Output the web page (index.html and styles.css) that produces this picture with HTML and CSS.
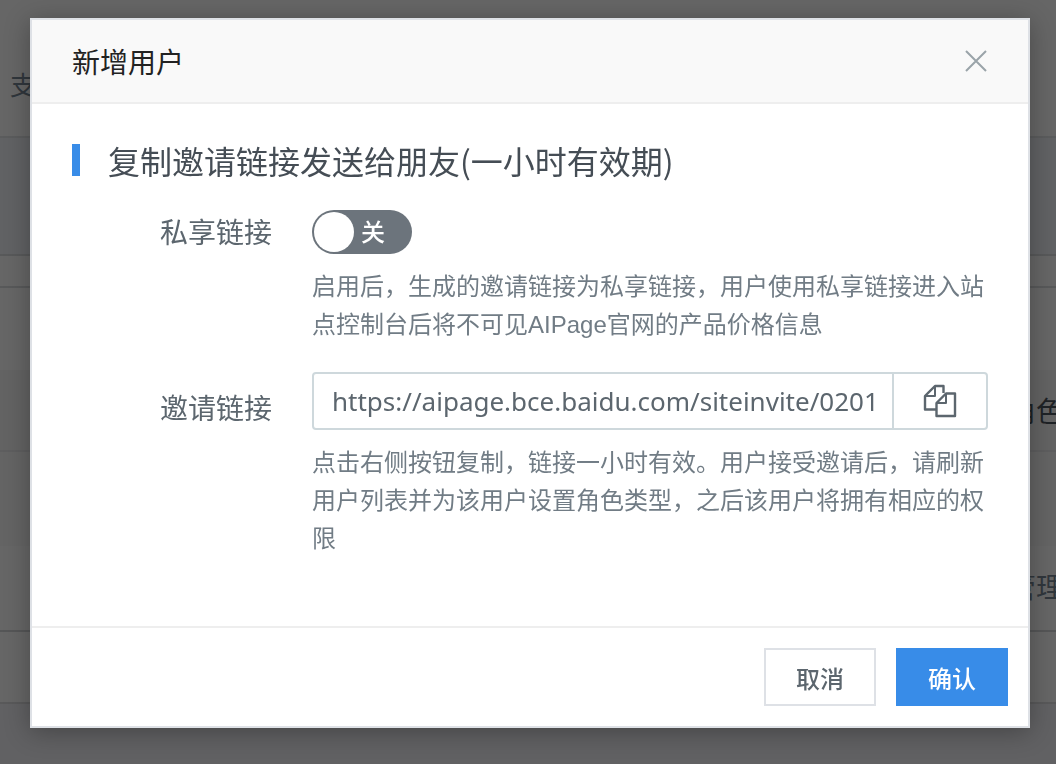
FILE: index.html
```html
<!DOCTYPE html>
<html lang="zh-CN">
  <head>
    <meta charset="utf-8">
    <meta name="viewport" content="width=device-width, initial-scale=1">
    <title>新增用户</title>
    <link rel="stylesheet" href="styles.css">
  </head>
  <body>
    <div class="page" aria-hidden="true">
      <div class="page-nav">支</div>
      <div class="page-banner"></div>
      <div class="page-space"></div>
      <div class="page-toolbar"></div>
      <div class="page-row page-row-head"><span>角色</span></div>
      <div class="page-row page-row-shade"></div>
      <div class="page-row page-row-user"><span>管理</span></div>
      <div class="page-row page-row-last"></div>
    </div>

    <div class="overlay">
      <form class="dialog" role="dialog" aria-labelledby="dialog-title">
        <div class="dialog-head">
          <h1 id="dialog-title">新增用户</h1>
          <button type="button" class="close" aria-label="关闭">
            <svg width="24" height="24" viewBox="0 0 24 24" fill="none" stroke="#9aa4a9" stroke-width="2">
              <path d="M2 2l20 20M22 2L2 22"/>
            </svg>
          </button>
        </div>

        <div class="dialog-body">
          <h2>复制邀请链接发送给朋友(一小时有效期)</h2>

          <div class="field">
            <label for="private-link">私享链接</label>
            <div class="field-content">
              <span class="switch">
                <input type="checkbox" id="private-link">
                <span class="switch-text">关</span>
              </span>
              <p class="help">启用后，生成的邀请链接为私享链接，用户使用私享链接进入站点控制台后将不可见AIPage官网的产品价格信息</p>
            </div>
          </div>

          <div class="field field-link">
            <label for="invite-link">邀请链接</label>
            <div class="field-content">
              <div class="copy-box">
                <input type="text" id="invite-link" value="https://aipage.bce.baidu.com/siteinvite/0201" readonly>
                <button type="button" class="copy" aria-label="复制">
                  <svg width="34" height="34" viewBox="0 0 34 34" fill="none" stroke="#5c666e" stroke-width="2.4" stroke-linejoin="round">
                    <path d="M13 25.500H2V12L12 2H20.500V9"/>
                    <path d="M12 2V12H2" stroke-width="2"/>
                    <path d="M23 9.500H32V32H13.500V19Z"/>
                    <path d="M23 10V19H14" stroke-width="2"/>
                  </svg>
                </button>
              </div>
              <p class="help">点击右侧按钮复制，链接一小时有效。用户接受邀请后，请刷新用户列表并为该用户设置角色类型，之后该用户将拥有相应的权限</p>
            </div>
          </div>
        </div>

        <div class="dialog-foot">
          <button type="button" class="btn">取消</button>
          <button type="submit" class="btn btn-primary">确认</button>
        </div>
      </form>
    </div>
  </body>
</html>
```

FILE: styles.css
```css
* {
  box-sizing: border-box;
}
body {
  margin: 0;
  height: 100vh;
  overflow: hidden;
  background-color: #616163;
  font-family: "Noto Sans CJK SC", sans-serif;
  color: #5c666e;
}
h1, h2, p {
  margin: 0;
  font-weight: normal;
}
button, input {
  font-family: inherit;
  color: inherit;
}
button {
  cursor: pointer;
}

/* dimmed page behind the dialog */
.page {
  background-color: #666;
  color: #30363c;
}
.page-nav {
  height: 138px;
  padding: 66px 10px 0;
  border-bottom: 2px solid #5b5c5d;
  font-size: 26px;
  line-height: 36px;
}
.page-banner {
  height: 118px;
  background-color: #616264;
  border-bottom: 2px solid #58595a;
}
.page-space {
  height: 32px;
  border-bottom: 2px solid #58595a;
}
.page-toolbar {
  height: 82px;
}
.page-row {
  display: flex;
  justify-content: flex-end;
  align-items: center;
  border-bottom: 2px solid #5e5e5f;
  font-size: 28px;
}
.page-row span {
  width: 48px;
  white-space: nowrap;
}
.page-row-head {
  height: 82px;
  background-color: #636363;
  color: #1e2226;
}
.page-row-shade {
  height: 94px;
  border-bottom: none;
  background-color: #646464;
}
.page-row-user {
  height: 86px;
  padding-bottom: 4px;
  border-bottom-color: #555657;
}
.page-row-last {
  height: 72px;
  border-bottom-color: #59595a;
}

/* dialog */
.overlay {
  position: fixed;
  inset: 0;
  padding: 18px 26px 18px 30px;
  overflow: hidden;
}
.dialog {
  background-color: #fff;
  border: 2px solid #dee1e6;
  box-shadow: 0 4px 24px rgba(0, 0, 0, 0.3);
}
.dialog-head {
  display: flex;
  justify-content: space-between;
  align-items: center;
  padding: 20px 40px;
  background-color: #f9f9f9;
  border-bottom: 2px solid #eee;
}
.dialog-head h1 {
  font-size: 28px;
  line-height: 42px;
  color: #222;
}
.close {
  display: flex;
  padding: 0;
  border: none;
  background: none;
}
.dialog-body {
  padding: 40px 40px 68px;
}
.dialog-body h2 {
  padding-left: 28px;
  border-left: 8px solid #388ce8;
  font-size: 32px;
  line-height: 32px;
  color: #454d55;
}
.field {
  display: flex;
  margin-top: 34px;
}
.field label {
  flex: none;
  width: 240px;
  padding-right: 40px;
  font-size: 28px;
  line-height: 42px;
  text-align: right;
}
.field-content {
  flex: 1;
  min-width: 0;
}
.field-link {
  margin-top: 28px;
}
.field-link label {
  padding-top: 14px;
}
.help {
  margin-top: 14px;
  font-family: "Liberation Sans", "Noto Sans CJK SC", sans-serif;
  font-size: 24px;
  line-height: 38px;
  color: #717c85;
}

.switch {
  display: grid;
  width: 100px;
  height: 44px;
}
.switch input,
.switch-text {
  grid-area: 1 / 1;
}
.switch input {
  appearance: none;
  margin: 0;
  padding: 2px;
  border-radius: 22px;
  background-color: #6c747c;
  cursor: pointer;
}
.switch input::before {
  content: "";
  display: block;
  width: 40px;
  height: 40px;
  border-radius: 50%;
  background-color: #fff;
}
.switch-text {
  padding-left: 49px;
  font-size: 24px;
  font-weight: 500;
  line-height: 42px;
  color: #fff;
  pointer-events: none;
}

.copy-box {
  display: flex;
  height: 58px;
  border: 2px solid #ced8dc;
  border-radius: 4px;
}
.copy-box input {
  flex: 1;
  min-width: 0;
  padding: 0 14px 0 18px;
  border: none;
  outline: none;
  background: none;
  font-family: "Noto Sans", sans-serif;
  font-size: 26px;
}
.copy {
  display: flex;
  justify-content: center;
  align-items: center;
  width: 94px;
  padding: 0;
  border: none;
  border-left: 2px solid #ced8dc;
  background: none;
}

.dialog-foot {
  display: flex;
  justify-content: flex-end;
  gap: 20px;
  padding: 20px;
  border-top: 2px solid #eee;
}
.btn {
  width: 112px;
  height: 58px;
  padding: 0;
  border: 2px solid #dee1e6;
  background-color: #fff;
  font-size: 24px;
  font-weight: 500;
}
.btn-primary {
  border-color: #388ce8;
  background-color: #388ce8;
  color: #fff;
}
```
